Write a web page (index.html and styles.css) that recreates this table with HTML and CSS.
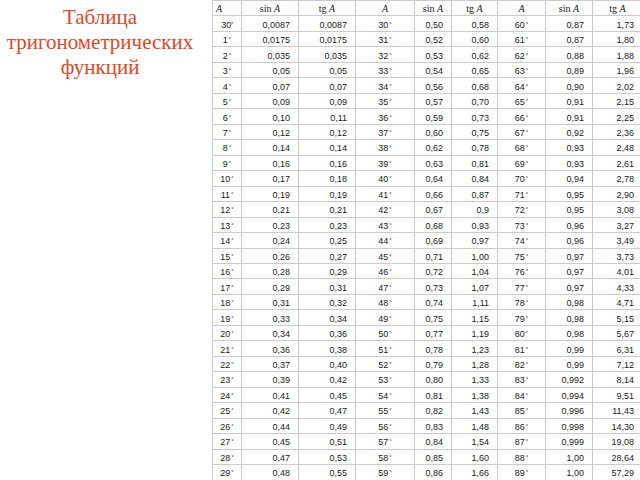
FILE: index.html
```html
<!DOCTYPE html>
<html lang="ru">
<head>
<meta charset="utf-8">
<title>Таблица тригонометрических функций</title>
<link rel="stylesheet" href="styles.css">
</head>
<body>
<div class="page">
  <h1 class="title">Таблица тригонометрических функций</h1>
  <table class="trig">
    <colgroup>
      <col class="w-a1"><col class="w-s1"><col class="w-t1">
      <col class="w-a2"><col class="w-s2"><col class="w-t2">
      <col class="w-a3"><col class="w-s3"><col class="w-t3">
    </colgroup>
    <thead>
      <tr>
        <th class="h-first"><i>A</i></th><th>sin <i>A</i></th><th>tg <i>A</i></th>
        <th><i>A</i></th><th>sin <i>A</i></th><th>tg <i>A</i></th>
        <th><i>A</i></th><th>sin <i>A</i></th><th>tg <i>A</i></th>
      </tr>
    </thead>
    <tbody>
      <tr><td class="a">30′</td><td>0,0087</td><td>0,0087</td><td class="a">30<span class="d">°</span></td><td>0,50</td><td>0,58</td><td class="a">60<span class="d">°</span></td><td>0,87</td><td>1,73</td></tr>
      <tr><td class="a">1<span class="d">°</span></td><td>0,0175</td><td>0,0175</td><td class="a">31<span class="d">°</span></td><td>0,52</td><td>0,60</td><td class="a">61<span class="d">°</span></td><td>0,87</td><td>1,80</td></tr>
      <tr><td class="a">2<span class="d">°</span></td><td>0,035</td><td>0,035</td><td class="a">32<span class="d">°</span></td><td>0,53</td><td>0,62</td><td class="a">62<span class="d">°</span></td><td>0,88</td><td>1,88</td></tr>
      <tr><td class="a">3<span class="d">°</span></td><td>0,05</td><td>0,05</td><td class="a">33<span class="d">°</span></td><td>0,54</td><td>0,65</td><td class="a">63<span class="d">°</span></td><td>0,89</td><td>1,96</td></tr>
      <tr><td class="a">4<span class="d">°</span></td><td>0,07</td><td>0,07</td><td class="a">34<span class="d">°</span></td><td>0,56</td><td>0,68</td><td class="a">64<span class="d">°</span></td><td>0,90</td><td>2,02</td></tr>
      <tr><td class="a">5<span class="d">°</span></td><td>0,09</td><td>0,09</td><td class="a">35<span class="d">°</span></td><td>0,57</td><td>0,70</td><td class="a">65<span class="d">°</span></td><td>0,91</td><td>2,15</td></tr>
      <tr><td class="a">6<span class="d">°</span></td><td>0,10</td><td>0,11</td><td class="a">36<span class="d">°</span></td><td>0,59</td><td>0,73</td><td class="a">66<span class="d">°</span></td><td>0,91</td><td>2,25</td></tr>
      <tr><td class="a">7<span class="d">°</span></td><td>0,12</td><td>0,12</td><td class="a">37<span class="d">°</span></td><td>0,60</td><td>0,75</td><td class="a">67<span class="d">°</span></td><td>0,92</td><td>2,36</td></tr>
      <tr><td class="a">8<span class="d">°</span></td><td>0,14</td><td>0,14</td><td class="a">38<span class="d">°</span></td><td>0,62</td><td>0,78</td><td class="a">68<span class="d">°</span></td><td>0,93</td><td>2,48</td></tr>
      <tr><td class="a">9<span class="d">°</span></td><td>0,16</td><td>0,16</td><td class="a">39<span class="d">°</span></td><td>0,63</td><td>0,81</td><td class="a">69<span class="d">°</span></td><td>0,93</td><td>2,61</td></tr>
      <tr><td class="a">10<span class="d">°</span></td><td>0,17</td><td>0,18</td><td class="a">40<span class="d">°</span></td><td>0,64</td><td>0,84</td><td class="a">70<span class="d">°</span></td><td>0,94</td><td>2,78</td></tr>
      <tr><td class="a">11<span class="d">°</span></td><td>0,19</td><td>0,19</td><td class="a">41<span class="d">°</span></td><td>0,66</td><td>0,87</td><td class="a">71<span class="d">°</span></td><td>0,95</td><td>2,90</td></tr>
      <tr><td class="a">12<span class="d">°</span></td><td>0,21</td><td>0,21</td><td class="a">42<span class="d">°</span></td><td>0,67</td><td>0,9</td><td class="a">72<span class="d">°</span></td><td>0,95</td><td>3,08</td></tr>
      <tr><td class="a">13<span class="d">°</span></td><td>0,23</td><td>0,23</td><td class="a">43<span class="d">°</span></td><td>0,68</td><td>0,93</td><td class="a">73<span class="d">°</span></td><td>0,96</td><td>3,27</td></tr>
      <tr><td class="a">14<span class="d">°</span></td><td>0,24</td><td>0,25</td><td class="a">44<span class="d">°</span></td><td>0,69</td><td>0,97</td><td class="a">74<span class="d">°</span></td><td>0,96</td><td>3,49</td></tr>
      <tr><td class="a">15<span class="d">°</span></td><td>0,26</td><td>0,27</td><td class="a">45<span class="d">°</span></td><td>0,71</td><td>1,00</td><td class="a">75<span class="d">°</span></td><td>0,97</td><td>3,73</td></tr>
      <tr><td class="a">16<span class="d">°</span></td><td>0,28</td><td>0,29</td><td class="a">46<span class="d">°</span></td><td>0,72</td><td>1,04</td><td class="a">76<span class="d">°</span></td><td>0,97</td><td>4,01</td></tr>
      <tr><td class="a">17<span class="d">°</span></td><td>0,29</td><td>0,31</td><td class="a">47<span class="d">°</span></td><td>0,73</td><td>1,07</td><td class="a">77<span class="d">°</span></td><td>0,97</td><td>4,33</td></tr>
      <tr><td class="a">18<span class="d">°</span></td><td>0,31</td><td>0,32</td><td class="a">48<span class="d">°</span></td><td>0,74</td><td>1,11</td><td class="a">78<span class="d">°</span></td><td>0,98</td><td>4,71</td></tr>
      <tr><td class="a">19<span class="d">°</span></td><td>0,33</td><td>0,34</td><td class="a">49<span class="d">°</span></td><td>0,75</td><td>1,15</td><td class="a">79<span class="d">°</span></td><td>0,98</td><td>5,15</td></tr>
      <tr><td class="a">20<span class="d">°</span></td><td>0,34</td><td>0,36</td><td class="a">50<span class="d">°</span></td><td>0,77</td><td>1,19</td><td class="a">80<span class="d">°</span></td><td>0,98</td><td>5,67</td></tr>
      <tr><td class="a">21<span class="d">°</span></td><td>0,36</td><td>0,38</td><td class="a">51<span class="d">°</span></td><td>0,78</td><td>1,23</td><td class="a">81<span class="d">°</span></td><td>0,99</td><td>6,31</td></tr>
      <tr><td class="a">22<span class="d">°</span></td><td>0,37</td><td>0,40</td><td class="a">52<span class="d">°</span></td><td>0,79</td><td>1,28</td><td class="a">82<span class="d">°</span></td><td>0,99</td><td>7,12</td></tr>
      <tr><td class="a">23<span class="d">°</span></td><td>0,39</td><td>0,42</td><td class="a">53<span class="d">°</span></td><td>0,80</td><td>1,33</td><td class="a">83<span class="d">°</span></td><td>0,992</td><td>8,14</td></tr>
      <tr><td class="a">24<span class="d">°</span></td><td>0,41</td><td>0,45</td><td class="a">54<span class="d">°</span></td><td>0,81</td><td>1,38</td><td class="a">84<span class="d">°</span></td><td>0,994</td><td>9,51</td></tr>
      <tr><td class="a">25<span class="d">°</span></td><td>0,42</td><td>0,47</td><td class="a">55<span class="d">°</span></td><td>0,82</td><td>1,43</td><td class="a">85<span class="d">°</span></td><td>0,996</td><td>11,43</td></tr>
      <tr><td class="a">26<span class="d">°</span></td><td>0,44</td><td>0,49</td><td class="a">56<span class="d">°</span></td><td>0,83</td><td>1,48</td><td class="a">86<span class="d">°</span></td><td>0,998</td><td>14,30</td></tr>
      <tr><td class="a">27<span class="d">°</span></td><td>0,45</td><td>0,51</td><td class="a">57<span class="d">°</span></td><td>0,84</td><td>1,54</td><td class="a">87<span class="d">°</span></td><td>0,999</td><td>19,08</td></tr>
      <tr><td class="a">28<span class="d">°</span></td><td>0,47</td><td>0,53</td><td class="a">58<span class="d">°</span></td><td>0,85</td><td>1,60</td><td class="a">88<span class="d">°</span></td><td>1,00</td><td>28,64</td></tr>
      <tr><td class="a">29<span class="d">°</span></td><td>0,48</td><td>0,55</td><td class="a">59<span class="d">°</span></td><td>0,86</td><td>1,66</td><td class="a">89<span class="d">°</span></td><td>1,00</td><td>57,29</td></tr>
    </tbody>
  </table>
</div>
</body>
</html>
```
FILE: styles.css
```css
html, body {
  margin: 0;
  padding: 0;
  background: #ffffff;
  width: 640px;
  height: 480px;
  overflow: hidden;
}

.page {
  display: flex;
  align-items: flex-start;
  width: 640px;
  height: 480px;
  overflow: hidden;
}

.title {
  flex: 0 0 200px;
  margin: 0 12px 0 0;
  padding-top: 5px;
  font-family: "Liberation Serif", "DejaVu Serif", serif;
  font-weight: normal;
  font-size: 21px;
  line-height: 25px;
  color: #e4461f;
  text-align: center;
}

.trig {
  flex: 0 0 auto;
  border-collapse: collapse;
  table-layout: fixed;
  width: 430px;
  font-family: "Liberation Sans", "DejaVu Sans", sans-serif;
  font-size: 9px;
  color: #1a1a1a;
}

.w-a1 { width: 29px; }
.w-s1 { width: 57px; }
.w-t1 { width: 57px; }
.w-a2 { width: 59px; }
.w-s2 { width: 37px; }
.w-t2 { width: 46px; }
.w-a3 { width: 48px; }
.w-s3 { width: 47px; }
.w-t3 { width: 50px; }

.trig tr {
  height: 15.48px;
}

.trig th,
.trig td {
  border: 1px solid #cbcbcb;
  padding: 2px 8px 0 0;
  height: 12px;
  line-height: 10px;
  white-space: nowrap;
  overflow: hidden;
  vertical-align: middle;
}

.trig td {
  text-align: right;
}

.trig th {
  font-family: "Liberation Serif", "DejaVu Serif", serif;
  font-weight: normal;
  font-size: 10px;
  text-align: center;
  padding-right: 0;
}

.trig th.h-first {
  text-align: left;
  padding-left: 3px;
}

.trig td.a {
  text-align: center;
  padding-right: 0;
}

.d {
  font-size: 6px;
  line-height: 0;
  vertical-align: 2px;
  margin-left: 1px;
}
```
